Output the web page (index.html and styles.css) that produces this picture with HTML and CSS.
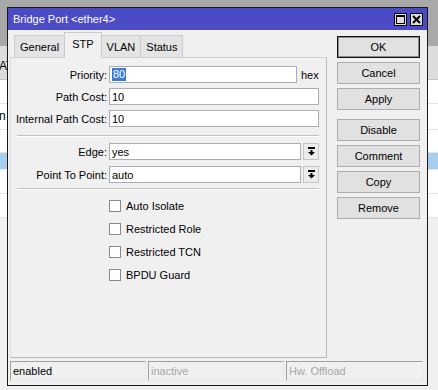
FILE: index.html
```html
<!DOCTYPE html>
<html lang="en">
<head>
    <meta charset="UTF-8">
    <title>Bridge Port &lt;ether4&gt;</title>
    <link rel="stylesheet" href="styles.css">
</head>
<body>
    <div class="backdrop">
        <div class="bd-toolbar"></div>
        <div class="bd-head"><span>AT</span></div>
        <div class="bd-row"></div>
        <div class="bd-row tall"><span>n</span></div>
        <div class="bd-row short"></div>
        <div class="bd-row selected"></div>
        <div class="bd-row"></div>
        <div class="bd-row"></div>
    </div>

    <div class="window">
        <div class="titlebar">
            <span class="title">Bridge Port &lt;ether4&gt;</span>
            <div class="title-btns">
                <span class="tbtn">
                    <svg width="9" height="9" viewBox="0 0 9 9"><rect x="0.5" y="0.5" width="8" height="8" fill="none" stroke="#000"/><rect x="0" y="0" width="9" height="2" fill="#000"/></svg>
                </span>
                <span class="tbtn">
                    <svg width="9" height="9" viewBox="0 0 9 9"><path d="M1 1 L8 8 M8 1 L1 8" stroke="#000" stroke-width="2"/></svg>
                </span>
            </div>
        </div>

        <div class="main">
            <div class="left">
                <div class="tabs">
                    <span class="tab">General</span>
                    <span class="tab active">STP</span>
                    <span class="tab">VLAN</span>
                    <span class="tab">Status</span>
                </div>
                <div class="panel">
                    <div class="row first">
                        <label>Priority:</label>
                        <span class="field short"><span class="sel">80</span></span>
                        <span class="unit">hex</span>
                    </div>
                    <div class="row">
                        <label>Path Cost:</label>
                        <span class="field">10</span>
                    </div>
                    <div class="row">
                        <label>Internal Path Cost:</label>
                        <span class="field">10</span>
                    </div>
                    <div class="sep"></div>
                    <div class="row drop-row">
                        <label>Edge:</label>
                        <span class="field">yes</span>
                        <span class="drop"><svg width="9" height="9" viewBox="0 0 9 9"><rect x="1" y="0" width="7" height="2" fill="#000"/><rect x="3.5" y="3" width="2" height="2" fill="#000"/><path d="M1 5 L8 5 L4.5 8.5 Z" fill="#000"/></svg></span>
                    </div>
                    <div class="row drop-row">
                        <label>Point To Point:</label>
                        <span class="field">auto</span>
                        <span class="drop"><svg width="9" height="9" viewBox="0 0 9 9"><rect x="1" y="0" width="7" height="2" fill="#000"/><rect x="3.5" y="3" width="2" height="2" fill="#000"/><path d="M1 5 L8 5 L4.5 8.5 Z" fill="#000"/></svg></span>
                    </div>
                    <div class="sep second"></div>
                    <div class="checks">
                        <div class="check"><span class="box"></span>Auto Isolate</div>
                        <div class="check"><span class="box"></span>Restricted Role</div>
                        <div class="check"><span class="box"></span>Restricted TCN</div>
                        <div class="check"><span class="box"></span>BPDU Guard</div>
                    </div>
                </div>
            </div>

            <div class="buttons">
                <span class="button default">OK</span>
                <span class="button">Cancel</span>
                <span class="button">Apply</span>
                <span class="button gap">Disable</span>
                <span class="button">Comment</span>
                <span class="button">Copy</span>
                <span class="button">Remove</span>
            </div>
        </div>

        <div class="statusbar">
            <span class="status">enabled</span>
            <span class="status dim">inactive</span>
            <span class="status dim last">Hw. Offload</span>
        </div>
    </div>
</body>
</html>
```

FILE: styles.css
```css
* {
    box-sizing: border-box;
}
body {
    margin: 0;
    width: 438px;
    height: 390px;
    overflow: hidden;
    position: relative;
    font-family: "Liberation Sans", Arial, sans-serif;
    font-size: 11px;
    color: #000;
    background: #f0f0f0;
}

/* list behind the dialog */
.bd-toolbar {
    height: 46px;
    background: #a9a9a9;
}
.bd-head {
    height: 34px;
    background: #dcdcdc;
    border-bottom: 1px solid #c4c4c4;
    padding-top: 13px;
    font-size: 12px;
}
.bd-head span,
.bd-row span {
    margin-left: -1px;
}
.bd-row {
    height: 24px;
    background: #fff;
    border-bottom: 1px solid #e4e4e4;
}
.bd-row.tall {
    height: 26px;
    padding-top: 5px;
    font-size: 12px;
}
.bd-row.short {
    height: 23px;
}
.bd-row.selected {
    height: 17px;
    background: #a8cdef;
}

/* dialog */
.window {
    position: absolute;
    left: 7px;
    top: 7px;
    width: 421px;
    height: 379px;
    border: 1px solid #1a1a1a;
    background: #f0f0f0;
    display: flex;
    flex-direction: column;
}
.titlebar {
    height: 22px;
    background: #4b4bc6;
    color: #fff;
    display: flex;
    align-items: center;
    padding: 0 4px 0 5px;
}
.title {
    flex: 1;
}
.title-btns {
    display: flex;
    gap: 3px;
}
.tbtn {
    width: 13px;
    height: 13px;
    border: 1px solid #000;
    background: #dedede;
    display: flex;
    align-items: center;
    justify-content: center;
}
.main {
    height: 331px;
    display: flex;
    padding-left: 2px;
}
.left {
    width: 317px;
}
.tabs {
    height: 27px;
    display: flex;
    align-items: flex-end;
    padding-left: 4px;
}
.tab {
    height: 22px;
    padding: 0 5px;
    display: flex;
    align-items: center;
    background: #e4e4e4;
    border: 1px solid #cacaca;
    border-bottom: none;
    margin-right: -1px;
}
.tab.active {
    height: 26px;
    margin-bottom: -1px;
    padding: 0 7px 3px;
    background: #f0f0f0;
    position: relative;
    z-index: 1;
}
.panel {
    height: 301px;
    border: 1px solid #b9b9b9;
    border-left-color: #dadada;
    border-top-color: #d0d0d0;
    padding: 8px 7px 0 0;
}
.row {
    display: flex;
    align-items: center;
    height: 17px;
    margin-top: 5px;
}
.row.first {
    margin-top: 0;
}
.row label {
    width: 98px;
    padding-right: 2px;
    text-align: right;
}
.field {
    flex: 1;
    height: 17px;
    background: #fff;
    border: 1px solid #abadb3;
    padding-left: 2px;
    display: flex;
    align-items: center;
}
.field.short {
    flex: none;
    width: 188px;
}
.sel {
    background: #3c7ad6;
    color: #fff;
    padding: 0 1px;
    line-height: 13px;
}
.unit {
    margin-left: 4px;
}
.drop {
    width: 16px;
    height: 17px;
    margin-left: 2px;
    border: 1px solid #c6c6c6;
    background: #ececec;
    display: flex;
    align-items: center;
    justify-content: center;
}
.sep {
    margin: 8px 0 0 6px;
    border-top: 1px solid #c2c2c2;
    border-bottom: 1px solid #fff;
}
.drop-row {
    margin-top: 6px;
}
.sep.second {
    margin-top: 5px;
}
.checks {
    padding: 10px 0 0 98px;
    display: flex;
    flex-direction: column;
    gap: 11px;
}
.check {
    height: 12px;
    display: flex;
    align-items: center;
}
.box {
    width: 12px;
    height: 12px;
    border: 1px solid #8a8a8a;
    background: #fff;
    margin-right: 5px;
}
.buttons {
    width: 83px;
    margin-left: 10px;
    padding-top: 6px;
    display: flex;
    flex-direction: column;
    gap: 4px;
}
.button {
    height: 22px;
    display: flex;
    align-items: center;
    justify-content: center;
    background: #e1e1e1;
    border: 1px solid #adadad;
}
.button.default {
    border: 1px solid #111;
    box-shadow: inset 0 0 0 1px #8c8c8c;
}
.button.gap {
    margin-top: 5px;
}
.statusbar {
    height: 20px;
    margin: 0 4px 0 2px;
    display: flex;
    gap: 2px;
}
.status {
    width: 136px;
    height: 20px;
    border: 1px solid #e6e6e6;
    border-top-color: #a0a0a0;
    border-left-color: #a0a0a0;
    padding-left: 2px;
    display: flex;
    align-items: center;
}
.status.dim {
    color: #a6a6a6;
}
.status.last {
    flex: 1;
}
```
